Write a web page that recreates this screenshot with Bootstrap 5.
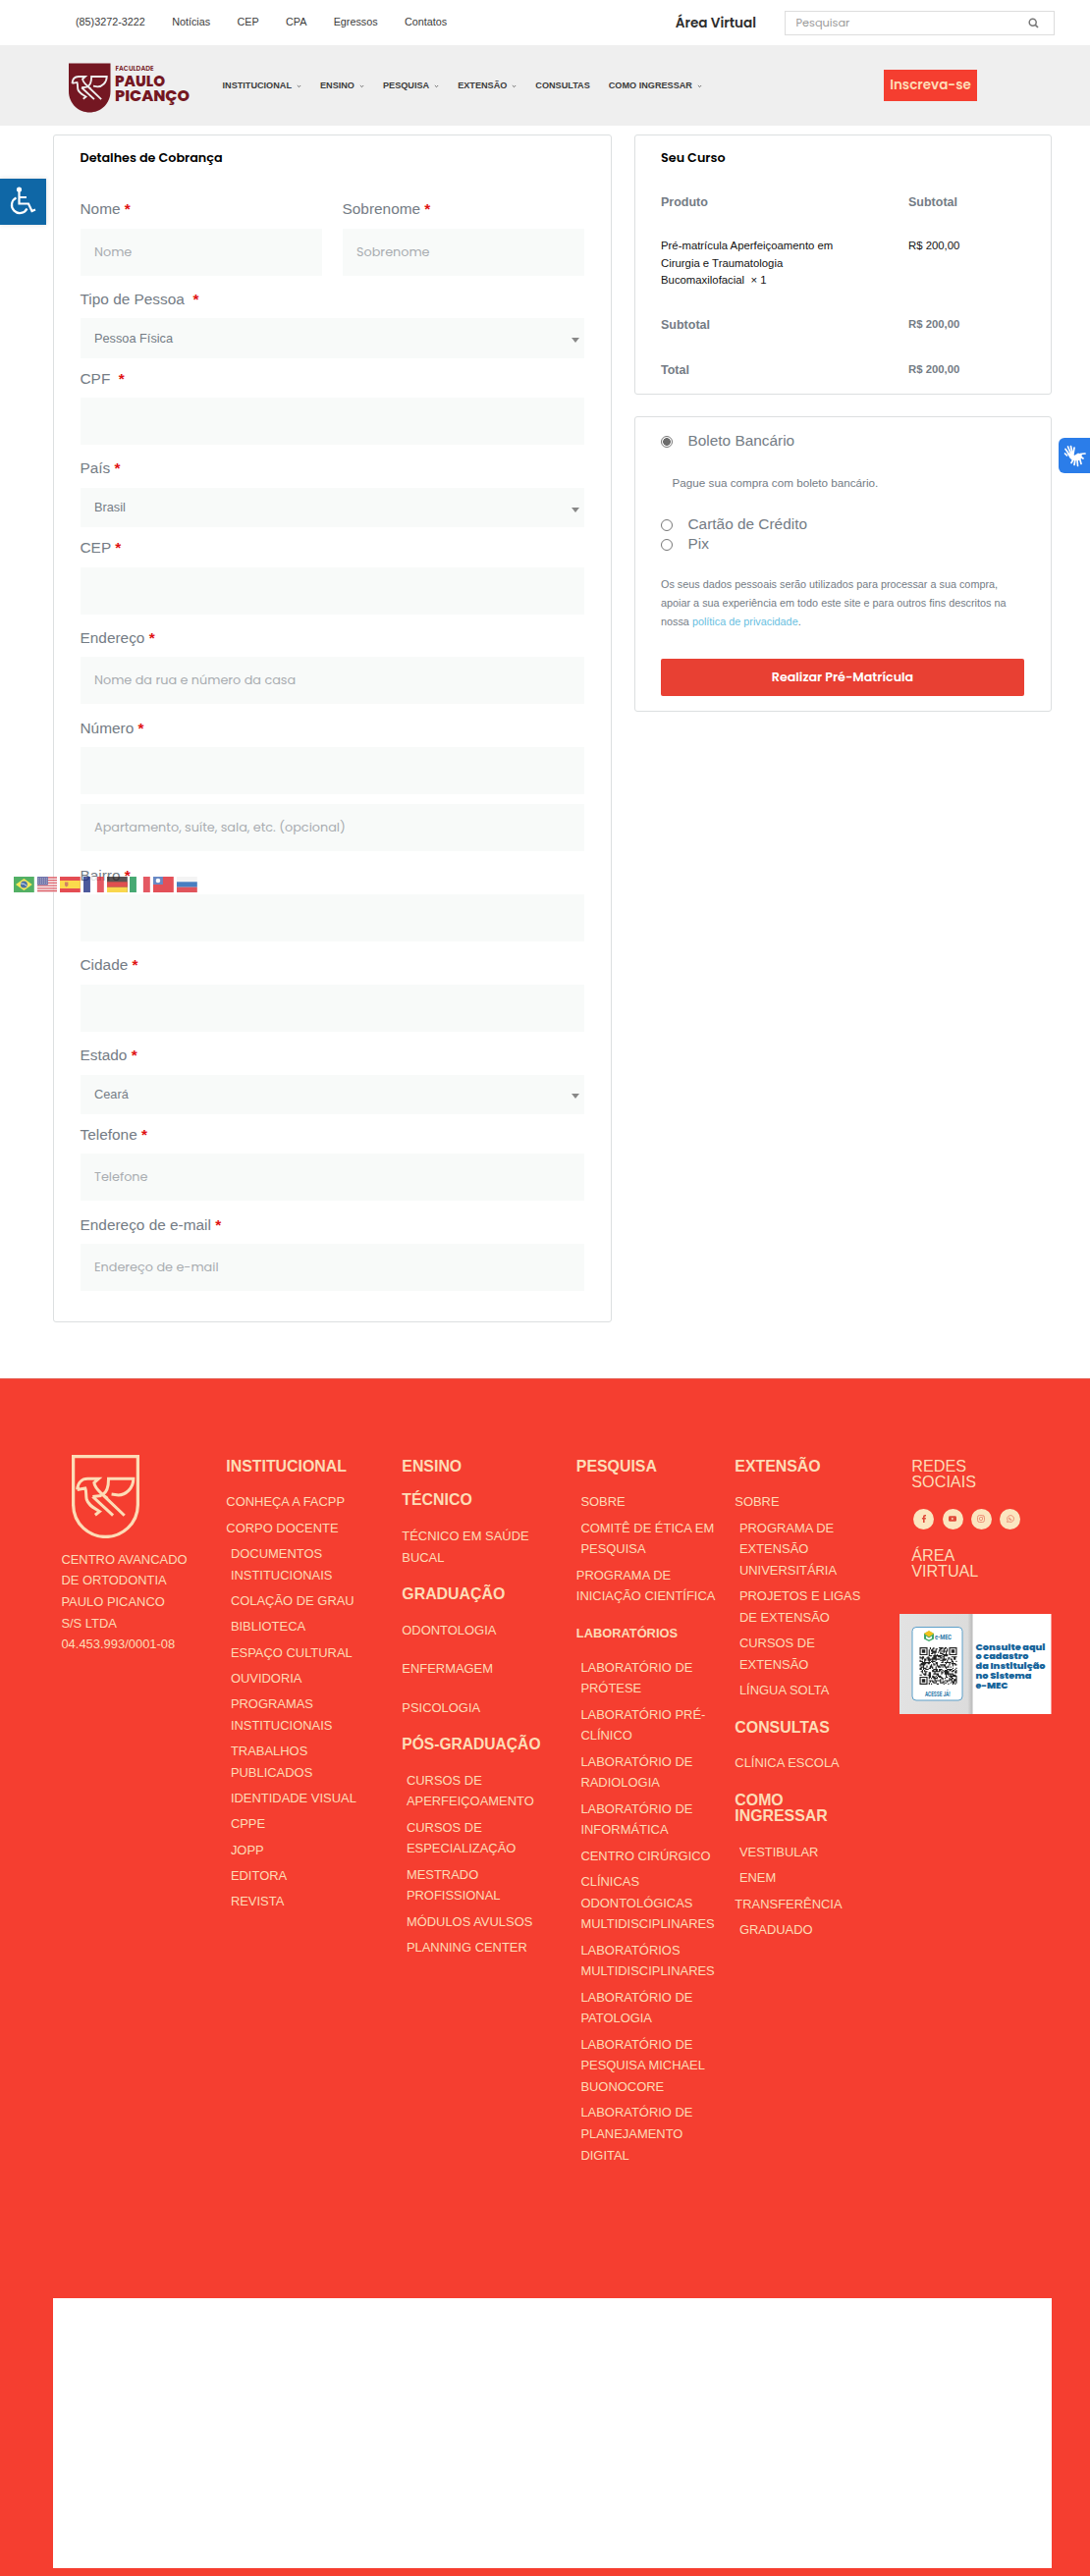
<!DOCTYPE html>
<html lang="pt-BR">
<head>
<meta charset="utf-8">
<meta name="viewport" content="width=device-width, initial-scale=1">
<title>Faculdade Paulo Picanço</title>
<link href="https://cdn.jsdelivr.net/npm/bootstrap@5.3.0/dist/css/bootstrap.min.css" rel="stylesheet">
<style>
:root{--pop:Poppins,Inter,"Open Sans",sans-serif;--cream:#fddcb6}
body{font-family:"Liberation Sans",Arial,sans-serif;color:#747c85;background:#fff;overflow-x:hidden}
a{text-decoration:none;color:inherit}
.topbar{height:46px;font-size:10.8px;color:#3b3b3b;padding-left:77px;padding-right:36.5px}
.topbar nav{gap:27.3px;margin-top:-1px}
.area-link{font:600 13.6px/20px var(--pop);color:#2d2d2d;margin-right:29px;margin-top:2px}
.search-box{width:274.5px;height:25px;border:1px solid #ddd;margin-top:1px;padding:0 15px 0 10.5px;font:11.3px var(--pop);color:#9b9b9b}
.mainbar{height:82px;background:#efefef;padding-left:69px;padding-right:115px}
.mainbar .menu{font-size:9.15px;font-weight:700;color:#3b3b3b;margin-left:31.5px;margin-top:1.5px;gap:19px}
.menu a{display:flex;align-items:center;gap:5px;white-space:nowrap}
.btn-insc{width:95px;height:32px;background:#f53e30;color:var(--cream);font:600 13.5px var(--pop);border-radius:0;padding:0}
.panel{border:1px solid #dcdfe0;border-radius:3px;background:#fff}
.panel h3{font:600 12.75px/20px var(--pop);color:#000;margin:0}
.page-main{padding:9px 39px 0 54px;gap:22.5px;height:1276px}
.billing{width:569px;height:1210px;padding:12.5px 27px 0 26.5px}
.field label{display:block;font-size:15.4px;line-height:38.5px;height:38.5px}
.field label span{color:#e01212;font-weight:700}
.field{margin-bottom:5.25px}
.field.sel{margin-bottom:1.8px}
.inp{height:48px;background:#f8faf9;border:0;border-radius:0;width:100%;padding:0 14.5px;font:12.8px var(--pop);color:#747c85;display:block}
.inp::placeholder{color:#a9adb1;opacity:1}
.inp.cbx{height:40.5px;font:12.75px "Liberation Sans",Arial,sans-serif;display:flex;align-items:center;justify-content:space-between;padding-right:5.5px}
.cbx span{margin-top:-1px}
.cbx i{border:4px solid transparent;border-top:5px solid #888;border-bottom:0;margin-top:4px}
.side{width:425.5px}
.order{height:265px;padding:12.5px 27px 0 26.5px}
.o-row{display:flex;font-size:12.5px;font-weight:700}
.o-row>:first-child{width:252px}
.o-row.prod{font-size:11.35px;font-weight:400;color:#111;line-height:17.35px}
.o-row .val{font-size:11.35px}
.pay{height:300.5px;margin-top:22px;padding:0 27px 0 26.5px}
.opt{display:flex;align-items:center;font-size:15.4px;height:20px}
.opt input{appearance:none;width:12px;height:12px;border:1px solid #777;border-radius:50%;margin:2px 15.5px 0 0;background:#fff}
.opt input:checked{background:radial-gradient(circle,#6d6d6d 3.6px,#fff 4.1px)}
.btn-pay{height:38.5px;background:#e84033;color:#fff;border-radius:2px;font:600 12.7px var(--pop);width:100%;padding:0}
footer{background:#f53e30;color:var(--cream);height:1220px;border-top:1px solid #e2574a;padding:0 39px 0 54px}
.f-cols{height:936px}
.f-cols h5{font-size:15.9px;line-height:16.5px;font-weight:700;margin:18.7px 0 17.2px}
.f-cols h5:first-child{margin-top:0}
.f-cols ul{list-style:none;padding:0;margin:0;font-size:12.95px;line-height:21.7px}
.f-cols li{margin-bottom:4.6px;white-space:nowrap}
.f-cols li.s{padding-left:4.6px}
.fc{padding-top:80.7px;flex:none}
.redes{padding-top:79.7px}
.redes h4{font-size:16.2px;line-height:16.7px;font-weight:400;margin:0 0 0 12px}
.soc{display:flex;gap:8.3px;margin:18.5px 0 18px 14px}
.soc span{width:21px;height:21px;border-radius:50%;background:#fbe6c0;display:flex;align-items:center;justify-content:center}
.whitebox{height:274.5px;background:#fff}
.acc{position:absolute;left:0;top:181.5px;width:47px;height:47.5px;background:#0f67a6;box-shadow:0 0 5px #0002}
.vlib{position:absolute;left:1078px;top:446px;width:32px;height:36px;background:#2b7de9;border-radius:6px 0 0 6px}
.flags{position:absolute;left:14px;top:893.3px;gap:2.9px;opacity:.78}
.flags svg{width:20.8px;height:16px;display:block}
</style>
</head>
<body class="position-relative">
<svg width="0" height="0" class="position-absolute">
 <symbol id="bird" viewBox="0 0 68 84"><path d="M5.5 35C6 28 10 24 16 24H27L22.500 28C23 33 28 37 31 40L53 61M5.500 35L13.500 33.500C15 37 14 41 15 45C17 51 22 53 28 57L23.500 60.500M21 42L41.500 61M30 41L21 42M31 40C35 38 37 33 37 24H62C62 34 54 40.500 47 40.500L40 39.500M31 40L36 44" fill="none" stroke="currentColor" stroke-width="3"/></symbol>
 <symbol id="chev" viewBox="0 0 6 4"><path d="M1 .8L3 2.800L5 .8" fill="none" stroke="#444" stroke-width=".9"/></symbol>
</svg>

<header>
 <div class="topbar d-flex align-items-center">
  <nav class="d-flex"><a href="#">(85)3272-3222</a><a href="#">Notícias</a><a href="#">CEP</a><a href="#">CPA</a><a href="#">Egressos</a><a href="#">Contatos</a></nav>
  <a class="area-link ms-auto" href="#">Área Virtual</a>
  <div class="search-box d-flex align-items-center justify-content-between"><span>Pesquisar</span>
   <svg width="11" height="11" viewBox="0 0 11 11"><circle cx="4.700" cy="4.700" r="3.500" fill="none" stroke="#777" stroke-width="1.500"/><path d="M7.300 7.300L10 10" stroke="#777" stroke-width="1.700"/></svg></div>
 </div>
 <div class="mainbar d-flex align-items-center">
  <svg width="126" height="52" viewBox="0 0 126 52" class="flex-shrink-0" style="margin-top:6px">
   <path d="M1 .5H43.500V29C43.500 42 33 50.500 22.200 50.500S1 42 1 29Z" fill="#741722"/>
   <use href="#bird" x="1" y="-1" width="42.500" height="52.500" color="#efefef"/>
   <g fill="#741722" font-family="Poppins,Inter,sans-serif"><text x="48.500" y="8" font-size="6" font-weight="600" textLength="39" lengthAdjust="spacingAndGlyphs">FACULDADE</text>
   <g font-weight="800" font-size="15.500"><text x="48" y="24" textLength="51" lengthAdjust="spacingAndGlyphs">PAULO</text><text x="48" y="38.500" textLength="76" lengthAdjust="spacingAndGlyphs">PICANÇO</text></g></g>
  </svg>
  <nav class="menu d-flex">
   <a href="#">INSTITUCIONAL <svg width="5" height="4"><use href="#chev"/></svg></a>
   <a href="#">ENSINO <svg width="5" height="4"><use href="#chev"/></svg></a>
   <a href="#">PESQUISA <svg width="5" height="4"><use href="#chev"/></svg></a>
   <a href="#">EXTENSÃO <svg width="5" height="4"><use href="#chev"/></svg></a>
   <a href="#">CONSULTAS</a>
   <a href="#">COMO INGRESSAR <svg width="5" height="4"><use href="#chev"/></svg></a>
  </nav>
  <a class="btn btn-insc ms-auto d-flex align-items-center justify-content-center" href="#">Inscreva-se</a>
 </div>
</header>

<main class="page-main d-flex align-items-start">
 <section class="panel billing">
  <h3>Detalhes de Cobrança</h3>
  <form style="margin-top:23.500px">
   <div class="d-flex" style="gap:20.500px">
    <div class="field flex-fill"><label>Nome <span>*</span></label><input class="inp" placeholder="Nome"></div>
    <div class="field flex-fill"><label>Sobrenome <span>*</span></label><input class="inp" placeholder="Sobrenome"></div>
   </div>
   <div class="field sel"><label>Tipo de Pessoa &nbsp;<span>*</span></label><div class="inp cbx"><span>Pessoa Física</span><i></i></div></div>
   <div class="field"><label>CPF &nbsp;<span>*</span></label><input class="inp"></div>
   <div class="field sel"><label>País <span>*</span></label><div class="inp cbx"><span>Brasil</span><i></i></div></div>
   <div class="field"><label>CEP <span>*</span></label><input class="inp"></div>
   <div class="field"><label>Endereço <span>*</span></label><input class="inp" placeholder="Nome da rua e número da casa"></div>
   <div class="field"><label>Número <span>*</span></label><input class="inp"><input class="inp" style="margin-top:10.200px" placeholder="Apartamento, suíte, sala, etc. (opcional)"></div>
   <div class="field"><label>Bairro <span>*</span></label><input class="inp"></div>
   <div class="field"><label>Cidade <span>*</span></label><input class="inp"></div>
   <div class="field sel"><label>Estado <span>*</span></label><div class="inp cbx"><span>Ceará</span><i></i></div></div>
   <div class="field"><label>Telefone <span>*</span></label><input class="inp" placeholder="Telefone"></div>
   <div class="field"><label>Endereço de e-mail <span>*</span></label><input class="inp" placeholder="Endereço de e-mail"></div>
  </form>
 </section>
 <div class="side">
  <section class="panel order">
   <h3>Seu Curso</h3>
   <div class="o-row" style="margin-top:26px"><div>Produto</div><div>Subtotal</div></div>
   <div class="o-row prod" style="margin-top:27px"><div>Pré-matrícula Aperfeiçoamento em<br>Cirurgia e Traumatologia<br>Bucomaxilofacial &nbsp;× 1</div><div>R$ 200,00</div></div>
   <div class="o-row" style="margin-top:27.500px"><div>Subtotal</div><div class="val">R$ 200,00</div></div>
   <div class="o-row" style="margin-top:27.500px"><div>Total</div><div class="val">R$ 200,00</div></div>
  </section>
  <section class="panel pay">
   <label class="opt" style="margin-top:14px"><input type="radio" name="p" checked>Boleto Bancário</label>
   <div style="font-size:11.700px;line-height:18px;margin:23.500px 0 23.500px 11.500px">Pague sua compra com boleto bancário.</div>
   <label class="opt"><input type="radio" name="p">Cartão de Crédito</label>
   <label class="opt"><input type="radio" name="p">Pix</label>
   <p class="mb-0 text-nowrap" style="font-size:10.830px;line-height:19.200px;margin-top:22px">Os seus dados pessoais serão utilizados para processar a sua compra,<br>apoiar a sua experiência em todo este site e para outros fins descritos na<br>nossa <a href="#" style="color:#68c0df">política de privacidade</a>.</p>
   <button class="btn btn-pay" style="margin-top:27px">Realizar Pré-Matrícula</button>
  </section>
 </div>
</main>

<footer>
 <div class="f-cols d-flex">
  <div class="fc" style="width:176.300px;padding:77px 0 0 8.400px">
   <svg class="d-block" style="margin-left:10.500px" width="69" height="85" viewBox="0 0 68 84"><path d="M1.500 1.500H66.500V50C66.500 70 50 82.500 34 82.500S1.500 70 1.500 50Z" fill="none" stroke="#fddcb6" stroke-width="3.200"/><use href="#bird" width="68" height="84"/></svg>
   <ul style="margin-top:10.500px"><li>CENTRO AVANCADO<br>DE ORTODONTIA<br>PAULO PICANCO<br>S/S LTDA<br>04.453.993/0001-08</li></ul>
  </div>
  <div class="fc" style="width:179px">
   <h5>INSTITUCIONAL</h5>
   <ul><li>CONHEÇA A FACPP</li><li>CORPO DOCENTE</li><li class="s">DOCUMENTOS<br>INSTITUCIONAIS</li><li class="s">COLAÇÃO DE GRAU</li><li class="s">BIBLIOTECA</li><li class="s">ESPAÇO CULTURAL</li><li class="s">OUVIDORIA</li><li class="s">PROGRAMAS<br>INSTITUCIONAIS</li><li class="s">TRABALHOS<br>PUBLICADOS</li><li class="s">IDENTIDADE VISUAL</li><li class="s">CPPE</li><li class="s">JOPP</li><li class="s">EDITORA</li><li class="s">REVISTA</li></ul>
  </div>
  <div class="fc" style="width:177.500px">
   <h5>ENSINO</h5>
   <h5 style="margin-top:18px">TÉCNICO</h5>
   <ul><li>TÉCNICO EM SAÚDE<br>BUCAL</li></ul>
   <h5>GRADUAÇÃO</h5>
   <ul><li style="margin-bottom:17.800px">ODONTOLOGIA</li><li style="margin-bottom:17.800px">ENFERMAGEM</li><li>PSICOLOGIA</li></ul>
   <h5 style="font-size:15.600px">PÓS-GRADUAÇÃO</h5>
   <ul><li class="s">CURSOS DE<br>APERFEIÇOAMENTO</li><li class="s">CURSOS DE<br>ESPECIALIZAÇÃO</li><li class="s">MESTRADO<br>PROFISSIONAL</li><li class="s">MÓDULOS AVULSOS</li><li class="s">PLANNING CENTER</li></ul>
  </div>
  <div class="fc" style="width:161.500px">
   <h5>PESQUISA</h5>
   <ul><li class="s">SOBRE</li><li class="s">COMITÊ DE ÉTICA EM<br>PESQUISA</li><li>PROGRAMA DE<br>INICIAÇÃO CIENTÍFICA</li></ul>
   <h5 style="font-size:12.850px;margin-bottom:15.400px">LABORATÓRIOS</h5>
   <ul><li class="s">LABORATÓRIO DE<br>PRÓTESE</li><li class="s">LABORATÓRIO PRÉ-<br>CLÍNICO</li><li class="s">LABORATÓRIO DE<br>RADIOLOGIA</li><li class="s">LABORATÓRIO DE<br>INFORMÁTICA</li><li class="s">CENTRO CIRÚRGICO</li><li class="s">CLÍNICAS<br>ODONTOLÓGICAS<br>MULTIDISCIPLINARES</li><li class="s">LABORATÓRIOS<br>MULTIDISCIPLINARES</li><li class="s">LABORATÓRIO DE<br>PATOLOGIA</li><li class="s">LABORATÓRIO DE<br>PESQUISA MICHAEL<br>BUONOCORE</li><li class="s">LABORATÓRIO DE<br>PLANEJAMENTO<br>DIGITAL</li></ul>
  </div>
  <div class="fc" style="width:168px">
   <h5>EXTENSÃO</h5>
   <ul><li>SOBRE</li><li class="s">PROGRAMA DE<br>EXTENSÃO<br>UNIVERSITÁRIA</li><li class="s">PROJETOS E LIGAS<br>DE EXTENSÃO</li><li class="s">CURSOS DE<br>EXTENSÃO</li><li class="s">LÍNGUA SOLTA</li></ul>
   <h5>CONSULTAS</h5>
   <ul><li>CLÍNICA ESCOLA</li></ul>
   <h5>COMO<br>INGRESSAR</h5>
   <ul><li class="s">VESTIBULAR</li><li class="s">ENEM</li><li>TRANSFERÊNCIA</li><li class="s">GRADUADO</li></ul>
  </div>
  <div class="fc redes">
   <h4>REDES<br>SOCIAIS</h4>
   <div class="soc">
    <span><svg width="8" height="8" viewBox="0 0 8 8"><path d="M3 8V4.500H1.900V3H3V2C3 .7 3.800 0 5 0H6V1.400H5.300C4.800 1.400 4.600 1.700 4.600 2.100V3H6L5.800 4.500H4.600V8Z" fill="#e04a3a"/></svg></span>
    <span><svg width="8" height="8" viewBox="0 0 8 8"><rect y="1.200" width="8" height="5.600" rx="1.400" fill="#e04a3a"/><path d="M3.200 2.700L5.400 4L3.200 5.300Z" fill="#fbe6c0"/></svg></span>
    <span><svg width="8" height="8" viewBox="0 0 8 8" fill="none" stroke="#e8806a" stroke-width=".8"><rect x=".5" y=".5" width="7" height="7" rx="2"/><circle cx="4" cy="4" r="1.700"/><circle cx="6" cy="2" r=".2"/></svg></span>
    <span><svg width="8" height="8" viewBox="0 0 8 8" fill="none" stroke="#e8806a" stroke-width=".8"><path d="M.6 7.400L1.100 5.600A3.400 3.400 0 1 1 2.500 7Z"/><path d="M2.700 2.700C2.800 4.200 3.800 5.200 5.300 5.300" stroke-width="1.100"/></svg></span>
   </div>
   <h4>ÁREA<br>VIRTUAL</h4>
   <svg id="emec" class="d-block" style="margin-top:34.500px" width="154.500" height="102.500" viewBox="0 0 154.500 102.500">
    <defs><linearGradient id="g"><stop offset="0" stop-color="#e2e2e2"/><stop offset=".93" stop-color="#dcdcdc"/><stop offset="1" stop-color="#b9b9b9"/></linearGradient></defs>
    <rect width="154.500" height="102.500" fill="#fff"/><rect width="74.500" height="102.500" fill="url(#g)"/>
    <rect x="13" y="13.500" width="51" height="74.500" rx="4" fill="#fff" stroke="#5d9fc9"/>
    <path d="M25 20L30 17.500L35 20V25.500L30 28L25 25.500Z" fill="#3fa66a"/><path d="M25 20L30 17L35 20L30 23.500Z" fill="#f2c21b"/><path d="M27 22.500L30 24.500L33 22.500V25L30 26.500L27 25Z" fill="#fff"/>
    <g font-family="Roboto,Inter,sans-serif" font-weight="700" fill="#2a76a8"><text x="36" y="25.800" font-size="7.500" textLength="17" lengthAdjust="spacingAndGlyphs">e-MEC</text><text x="26" y="83.500" font-size="7" textLength="25.500" lengthAdjust="spacingAndGlyphs">ACESSE JÁ!</text></g>
    <g id="qr" transform="translate(20.500 34)" fill="#222"></g>
    <g font-family="Poppins,Inter,sans-serif" font-weight="900" font-size="8.300" fill="#17659b"><text x="77.500" y="36.500" textLength="71" lengthAdjust="spacingAndGlyphs">Consulte aqui</text><text x="77.500" y="46.300" textLength="54" lengthAdjust="spacingAndGlyphs">o cadastro</text><text x="77.500" y="56.100" textLength="71" lengthAdjust="spacingAndGlyphs">da Instituição</text><text x="77.500" y="65.900" textLength="57" lengthAdjust="spacingAndGlyphs">no Sistema</text><text x="77.500" y="75.700" textLength="33" lengthAdjust="spacingAndGlyphs">e-MEC</text></g>
   </svg>
  </div>
 </div>
 <div class="whitebox"></div>
</footer>

<a class="acc d-flex align-items-center justify-content-center" href="#"><svg width="27" height="30" viewBox="0 0 27 30" fill="none" stroke="#fff" stroke-width="2.200"><circle cx="9.500" cy="3" r="2.600" fill="#fff" stroke="none"/><path d="M9.500 5V17.500H19L22.500 25L26 23.500M9.500 11H17M6.500 11.500A8.200 8.200 0 1 0 17.500 22.500"/></svg></a>
<a class="vlib d-flex align-items-center justify-content-center" href="#"><svg width="23" height="23" viewBox="0 0 23 23" fill="none" stroke="#fff" stroke-width="1.700" stroke-linecap="round"><path d="M4.500 9L7 12M6 10L2 4.500M7.500 9L4.500 2M9 9L7.500 1.500M10 9L11 3M3.500 11L1.500 9"/><path d="M5 9L10 8L11 11L15 8.500L19 10.500L17 16L9 16L6 13Z" fill="#fff" stroke="none"/><path d="M17 9.500L22 9M10 15L8 18.500M12 15L11 20.500M14 15L14.500 21.500M16.500 14L18 19.500M17 12L20 14"/></svg></a>
<div class="flags d-flex">
 <svg viewBox="0 0 21 16" preserveAspectRatio="none"><rect width="21" height="16" fill="#239a3b"/><path d="M10.500 2L19 8L10.500 14L2 8Z" fill="#f5e32e"/><circle cx="10.500" cy="8" r="3.500" fill="#1b4b8c"/><path d="M7.300 7Q10.500 6.500 13.500 9.500" stroke="#fff" fill="none" stroke-width=".8"/></svg>
 <svg viewBox="0 0 21 16" preserveAspectRatio="none"><rect width="21" height="16" fill="#f4f4f4"/><path d="M0 1H21M0 3.700H21M0 6.400H21M0 9.100H21M0 11.800H21M0 14.500H21" stroke="#d8323e" stroke-width="1.300"/><rect width="11" height="8.500" fill="#4a4e94"/><path d="M1 2H10M1 4.200H10M1 6.400H10" stroke="#ddd" stroke-width=".7" stroke-dasharray="1 1"/></svg>
 <svg viewBox="0 0 21 16" preserveAspectRatio="none"><rect width="21" height="16" fill="#dd1c24"/><rect y="4" width="21" height="8" fill="#fbd21a"/><path d="M5 5.500H8.500V9L6.700 10.500L5 9Z" fill="#c4603a"/></svg>
 <svg viewBox="0 0 21 16" preserveAspectRatio="none"><rect width="21" height="16" fill="#fff"/><rect width="7" height="16" fill="#1a2b80"/><rect x="14" width="7" height="16" fill="#dd2b38"/></svg>
 <svg viewBox="0 0 21 16" preserveAspectRatio="none"><rect width="21" height="16" fill="#2c2424"/><rect y="5.300" width="21" height="5.400" fill="#d81e1e"/><rect y="10.700" width="21" height="5.300" fill="#f8cd1c"/></svg>
 <svg viewBox="0 0 21 16" preserveAspectRatio="none"><rect width="21" height="16" fill="#fff"/><rect width="7" height="16" fill="#14924d"/><rect x="14" width="7" height="16" fill="#dd2b38"/></svg>
 <svg viewBox="0 0 21 16" preserveAspectRatio="none"><rect width="21" height="16" fill="#dc1f2a"/><rect width="10" height="8" fill="#3e68b5"/><circle cx="5" cy="4" r="2.300" fill="#fff"/></svg>
 <svg viewBox="0 0 21 16" preserveAspectRatio="none"><rect width="21" height="16" fill="#f2f2f2"/><rect y="5.300" width="21" height="5.400" fill="#155bb0"/><rect y="10.700" width="21" height="5.300" fill="#d8252f"/></svg>
</div>

<script src="https://cdn.jsdelivr.net/npm/bootstrap@5.3.0/dist/js/bootstrap.bundle.min.js"></script>
<script>
// QR modules: a 33x33 grid with three finder squares
(function(){
 var n=33,s=38/n,d='',seed=7;
 function finder(x,y){
  var o=[[0,0],[n-7,0],[0,n-7]];
  for(var k=0;k<3;k++){var a=x-o[k][0],b=y-o[k][1];
   if(a>=-1&&b>=-1&&a<=7&&b<=7){var r=Math.max(Math.abs(a-3),Math.abs(b-3));return r===3||r<2?1:0}}
  return -1}
 for(var y=0;y<n;y++)for(var x=0;x<n;x++){
  seed=(seed*1103515245+12345)%2147483648;
  var f=finder(x,y),on=f<0?seed/2147483648>.46:f;
  if(on)d+='M'+(x*s).toFixed(2)+' '+(y*s).toFixed(2)+'h'+s.toFixed(2)+'v'+s.toFixed(2)+'h-'+s.toFixed(2)+'z'}
 var p=document.createElementNS('http://www.w3.org/2000/svg','path');
 p.setAttribute('d',d);document.getElementById('qr').appendChild(p);
})();
</script>
</body>
</html>
